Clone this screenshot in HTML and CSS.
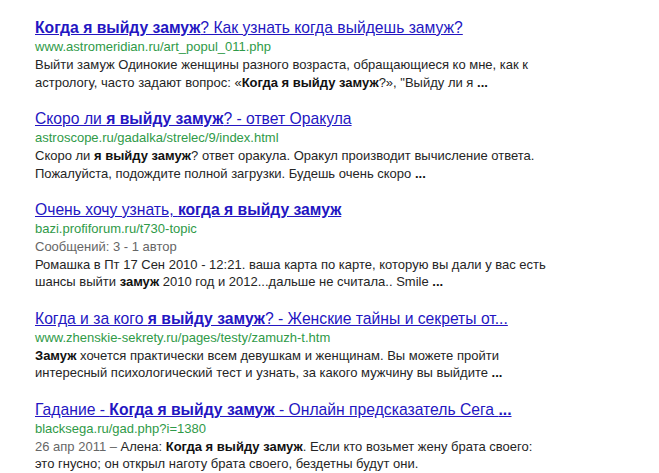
FILE: index.html
```html
<!DOCTYPE html>
<html lang="ru">
<head>
<meta charset="utf-8">
<title>Когда я выйду замуж</title>
<link rel="stylesheet" href="styles.css">
</head>
<body>
<ol class="results">
  <li class="result">
    <a class="title" href="#"><b>Когда я выйду замуж</b>? Как узнать когда выйдешь замуж?</a>
    <div class="url">www.astromeridian.ru/art_popul_011.php</div>
    <div class="snippet">Выйти замуж Одинокие женщины разного возраста, обращающиеся ко мне, как к<br>астрологу, часто задают вопрос: «<b>Когда я выйду замуж</b>?», "Выйду ли я <b>...</b></div>
  </li>
  <li class="result">
    <a class="title" href="#">Скоро ли <b>я выйду замуж</b>? - ответ Оракула</a>
    <div class="url">astroscope.ru/gadalka/strelec/9/index.html</div>
    <div class="snippet">Скоро ли <b>я выйду замуж</b>? ответ оракула. Оракул производит вычисление ответа.<br>Пожалуйста, подождите полной загрузки. Будешь очень скоро <b>...</b></div>
  </li>
  <li class="result">
    <a class="title" href="#">Очень хочу узнать, <b>когда я выйду замуж</b></a>
    <div class="url">bazi.profiforum.ru/t730-topic</div>
    <div class="meta">Сообщений: 3 - 1 автор</div>
    <div class="snippet">Ромашка в Пт 17 Сен 2010 - 12:21. ваша карта по карте, которую вы дали у вас есть<br>шансы выйти <b>замуж</b> 2010 год и 2012...дальше не считала.. Smile <b>...</b></div>
  </li>
  <li class="result">
    <a class="title" href="#">Когда и за кого <b>я выйду замуж</b>? - Женские тайны и секреты от...</a>
    <div class="url">www.zhenskie-sekrety.ru/pages/testy/zamuzh-t.htm</div>
    <div class="snippet"><b>Замуж</b> хочется практически всем девушкам и женщинам. Вы можете пройти<br>интересный психологический тест и узнать, за какого мужчину вы выйдите <b>...</b></div>
  </li>
  <li class="result">
    <a class="title" href="#">Гадание - <b>Когда я выйду замуж</b> - Онлайн предсказатель Сега <b>...</b></a>
    <div class="url">blacksega.ru/gad.php?i=1380</div>
    <div class="snippet"><span class="date">26 апр 2011 – </span>Алена: <b>Когда я выйду замуж</b>. Если кто возьмет жену брата своего:<br>это гнусно; он открыл наготу брата своего, бездетны будут они.</div>
  </li>
</ol>
</body>
</html>
```

FILE: styles.css
```css
html, body {
  margin: 0;
  padding: 0;
  background: #ffffff;
}
body {
  font-family: "Liberation Sans", Arial, sans-serif;
  color: #222222;
}
.results {
  list-style: none;
  margin: 0;
  padding: 18px 0 0 35px;
  display: flex;
  flex-direction: column;
  gap: 18px;
}
.result {
  display: flex;
  flex-direction: column;
  align-items: flex-start;
}
.title {
  font-size: 15.7px;
  line-height: 20px;
  color: #2416c2;
  text-decoration: underline;
  white-space: nowrap;
}
.url {
  font-size: 13px;
  line-height: 18px;
  color: #2f9a48;
  white-space: nowrap;
}
.meta {
  font-size: 13px;
  line-height: 17.5px;
  color: #666666;
}
.snippet {
  font-size: 13px;
  line-height: 17.5px;
  color: #252525;
  white-space: nowrap;
}
.snippet b {
  color: #111111;
}
.date {
  color: #666666;
}
```
